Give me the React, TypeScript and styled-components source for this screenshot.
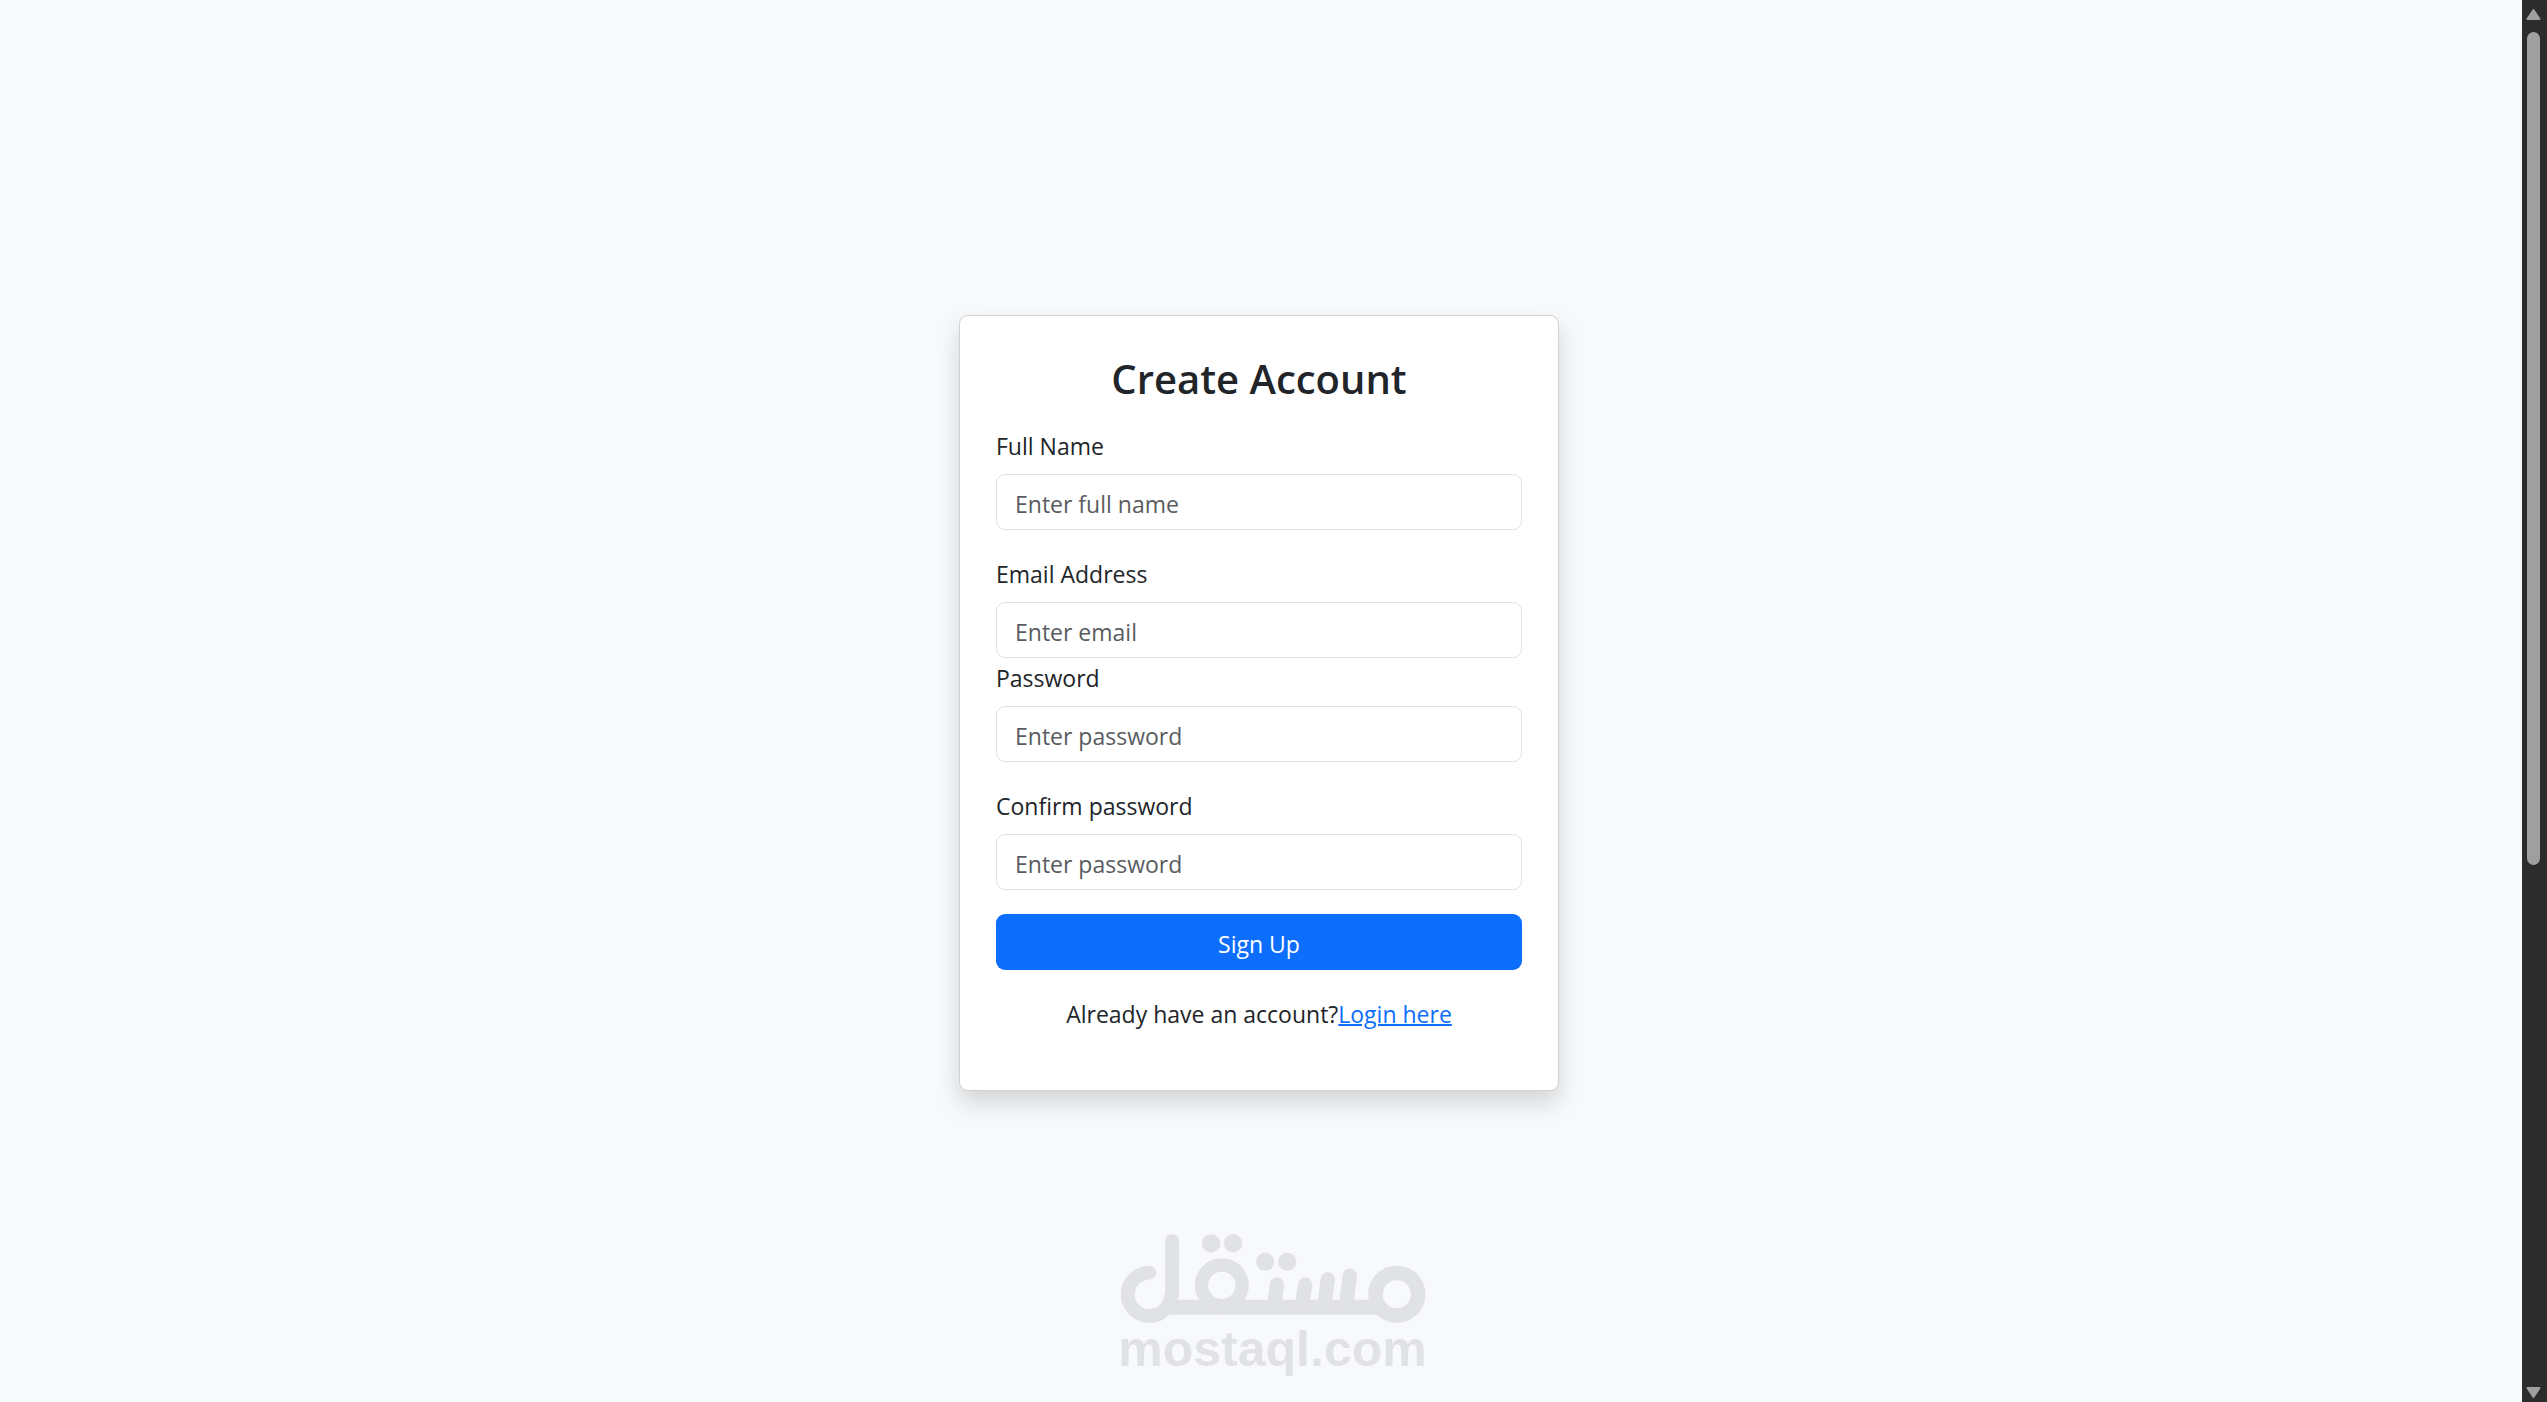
import React from "react";
import styled, { createGlobalStyle } from "styled-components";

const GlobalStyle = createGlobalStyle`
  *, *::before, *::after { box-sizing: border-box; }
  body {
    margin: 0;
    background: #f8f9fb;
    color: #212529;
    font-family: "Open Sans", "Noto Sans", sans-serif;
    font-size: 23px;
    line-height: 40px;
  }
`;

const Screen = styled.div`
  display: grid;
  grid-template-columns: 1fr 25px;
  height: 100vh;
  position: relative;
  overflow: hidden;
`;

const Page = styled.main`
  display: flex;
  align-items: center;
  justify-content: center;
  padding: 4px 4px 0 0;
`;

const Card = styled.section`
  width: 100%;
  max-width: 600px;
  padding: 36px;
  background: #fff;
  border: 1px solid #d0d2d4;
  border-radius: 9px;
  box-shadow: 0 12px 24px rgba(0, 0, 0, 0.15);
`;

const Title = styled.h2`
  margin: 0 0 20px;
  font-size: 40px;
  font-weight: 600;
  line-height: 54px;
  text-align: center;
`;

const Field = styled.div<{ $tight?: boolean }>`
  display: flex;
  flex-direction: column;
  gap: 8px;
  margin-bottom: ${(p) => (p.$tight ? 0 : 24)}px;
`;

const Input = styled.input`
  width: 100%;
  height: 56px;
  padding: 3px 18px 0;
  font: inherit;
  color: inherit;
  background: #fff;
  border: 1px solid #dee2e6;
  border-radius: 9px;

  &::placeholder {
    color: #595c5f;
    opacity: 1;
  }
`;

const SubmitButton = styled.button`
  display: block;
  width: 100%;
  height: 56px;
  padding: 3px 18px 0;
  font: inherit;
  color: #fff;
  background: #0d6efd;
  border: 0;
  border-radius: 9px;
  cursor: pointer;
`;

const Footnote = styled.p`
  margin: 24px 0 20px;
  text-align: center;
`;

const Link = styled.a`
  color: #0d6efd;
  text-decoration: underline;
  text-decoration-thickness: 2px;
`;

const Watermark = styled.div`
  position: absolute;
  left: 0;
  right: 0;
  bottom: 28px;
  display: flex;
  flex-direction: column;
  align-items: center;
  padding-right: 2px;
  color: #e1e2e4;
  pointer-events: none;
`;

const WatermarkText = styled.span`
  font-family: "Liberation Sans", sans-serif;
  font-size: 50px;
  font-weight: 700;
  line-height: 50px;
`;

const Scrollbar = styled.div`
  display: flex;
  flex-direction: column;
  align-items: center;
  justify-content: space-between;
  padding: 9px 2px 4px 0;
  background: #2c2c2c;
`;

const Track = styled.div`
  flex: 1;
  width: 13px;
  margin: 12px 0;
`;

const Thumb = styled.div`
  height: 62%;
  border-radius: 7px;
  background: #9f9f9f;
`;

const Arrow = ({ down = false }: { down?: boolean }) => (
  <svg width="15" height="11" viewBox="0 0 15 11" aria-hidden="true">
    <path
      d={down ? "M1.5 1H13.5L7.5 10Z" : "M1.5 10H13.5L7.5 1Z"}
      fill="#9f9f9f"
      stroke="#9f9f9f"
      strokeWidth="2"
      strokeLinejoin="round"
    />
  </svg>
);

const Logo = () => (
  <svg width="306" height="90" viewBox="60 40 917 270" fill="none" stroke="currentColor" aria-hidden="true">
    <path d="M147 156A65 65 0 1 0 212 231Q216 225 216 212V61" strokeWidth="42" strokeLinecap="round" />
    <path d="M200 259.5H850" strokeWidth="45" />
    <circle cx="365" cy="194" r="61" strokeWidth="40" />
    <circle cx="890" cy="221" r="64" strokeWidth="44" />
    <path
      d="M530 192L523 250M615 192L606 250M683 176L673 250M749 165L738 250"
      strokeWidth="43"
      strokeLinecap="round"
    />
    <g fill="currentColor" stroke="none">
      <circle cx="333" cy="68" r="27.5" />
      <circle cx="399" cy="68" r="27.5" />
      <circle cx="495" cy="123" r="27.5" />
      <circle cx="561" cy="123" r="27.5" />
    </g>
  </svg>
);

const fields = [
  { id: "name", label: "Full Name", type: "text", placeholder: "Enter full name" },
  { id: "email", label: "Email Address", type: "email", placeholder: "Enter email", tight: true },
  { id: "password", label: "Password", type: "password", placeholder: "Enter password" },
  { id: "confirm", label: "Confirm password", type: "password", placeholder: "Enter password" },
];

export default function App() {
  return (
    <>
      <GlobalStyle />
      <Screen>
        <Page>
          <Card>
            <Title>Create Account</Title>
            <form onSubmit={(e) => e.preventDefault()}>
              {fields.map((f) => (
                <Field key={f.id} $tight={f.tight}>
                  <label htmlFor={f.id}>{f.label}</label>
                  <Input id={f.id} type={f.type} placeholder={f.placeholder} />
                </Field>
              ))}
              <SubmitButton type="submit">Sign Up</SubmitButton>
            </form>
            <Footnote>
              Already have an account?<Link href="#login">Login here</Link>
            </Footnote>
          </Card>
        </Page>
        <Scrollbar aria-hidden="true">
          <Arrow />
          <Track>
            <Thumb />
          </Track>
          <Arrow down />
        </Scrollbar>
        <Watermark>
          <Logo />
          <WatermarkText>mostaql.com</WatermarkText>
        </Watermark>
      </Screen>
    </>
  );
}
